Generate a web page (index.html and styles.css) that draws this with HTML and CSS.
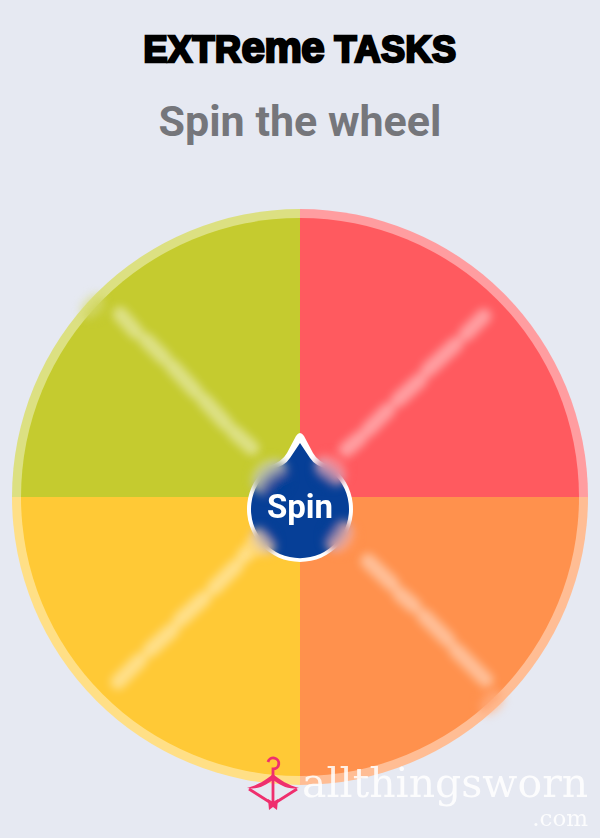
FILE: index.html
```html
<!DOCTYPE html>
<html lang="en">
<head>
    <meta charset="UTF-8">
    <meta name="viewport" content="width=device-width, initial-scale=1.0">
    <title>Extreme Tasks</title>
    <link rel="stylesheet" href="styles.css">
</head>
<body>
    <div class="page">
        <h1 class="title">EXTR<span class="title-low">eme</span> TASKS</h1>
        <h2 class="subtitle">Spin the wheel</h2>

        <svg class="wheel" viewBox="12 209 576 576" xmlns="http://www.w3.org/2000/svg">
            <defs>
                <filter id="blurText" x="-30%" y="-30%" width="160%" height="160%">
                    <feGaussianBlur stdDeviation="4.5"></feGaussianBlur>
                </filter>
                <filter id="blurArt" x="0" y="0" width="100%" height="100%">
                    <feGaussianBlur stdDeviation="8"></feGaussianBlur>
                </filter>
                <filter id="blurMask" x="-50%" y="-50%" width="200%" height="200%">
                    <feGaussianBlur stdDeviation="4"></feGaussianBlur>
                </filter>
                <mask id="smudges" maskUnits="userSpaceOnUse" x="12" y="209" width="576" height="576">
                    <g fill="#fff" filter="url(#blurMask)">
                        <circle cx="270" cy="477" r="20"></circle>
                        <circle cx="331" cy="470" r="17"></circle>
                        <circle cx="262" cy="542" r="15"></circle>
                        <circle cx="340" cy="537" r="17"></circle>
                        <circle cx="92" cy="306" r="14"></circle>
                        <circle cx="492" cy="703" r="14"></circle>
                    </g>
                </mask>
                <g id="art">
                    <!-- wheel: light rim, then the solid slice -->
                    <path class="rim-red" d="M300 497V209A288 288 0 0 1 588 497Z"></path>
                    <path class="rim-orange" d="M300 497H588A288 288 0 0 1 300 785Z"></path>
                    <path class="rim-yellow" d="M300 497V785A288 288 0 0 1 12 497Z"></path>
                    <path class="rim-green" d="M300 497H12A288 288 0 0 1 300 209Z"></path>
                    <path class="slice-red" d="M300 497V218A279 279 0 0 1 579 497Z"></path>
                    <path class="slice-orange" d="M300 497H579A279 279 0 0 1 300 776Z"></path>
                    <path class="slice-yellow" d="M300 497V776A279 279 0 0 1 21 497Z"></path>
                    <path class="slice-green" d="M300 497H21A279 279 0 0 1 300 218Z"></path>

                    <!-- blurred out slice labels -->
                    <g class="labels" filter="url(#blurText)">
                        <path d="M120 314L136 332M146 340L164 358M172 366L196 392M204 400L226 424M234 432L252 448"></path>
                        <path d="M484 316L466 334M456 344L428 370M420 380L398 400M388 410L368 430M360 438L346 450"></path>
                        <path d="M368 561L392 584M400 594L414 606M424 616L448 640M456 650L486 680"></path>
                        <path d="M118 682L140 660M150 650L172 630M180 620L204 598M214 588L236 566M244 556L254 546"></path>
                    </g>

                    <!-- spin button -->
                    <path class="pin" d="M296 436Q300 430 304 436L313 453Q318 462 331 466A53 53 0 1 1 269 466Q282 462 287 453Z"></path>
                    <path class="pin-inner" d="M300 443L310 458Q315 466 328 469A49 49 0 1 1 272 469Q285 466 290 458Z"></path>
                </g>
            </defs>

            <use href="#art"></use>
            <g mask="url(#smudges)">
                <use href="#art" filter="url(#blurArt)"></use>
            </g>
            <text class="spin-label" x="300" y="518">Spin</text>
        </svg>

        <div class="watermark">
            <svg class="hanger" viewBox="0 0 54 54" xmlns="http://www.w3.org/2000/svg">
                <path d="M22 6A5.5 5.5 0 1 1 27 13V18"></path>
                <path class="hanger-fill" d="M1 32C12 29 20 24 27 18C34 24 42 29 53 32C42 34 34 29 27 24C20 29 12 34 1 32Z"></path>
                <path d="M3 33L25 47M51 33L29 47M27 18V47"></path>
                <path class="hanger-fill" d="M22 43L27 46L32 43L31 54L27 51L23 54Z"></path>
            </svg>
            <div class="brand">
                <span class="brand-name">allthingsworn</span>
                <span class="brand-tld">.com</span>
            </div>
        </div>
    </div>
</body>
</html>
```

FILE: styles.css
```css
* {
    margin: 0;
    padding: 0;
    box-sizing: border-box;
}

body {
    background: #e6e9f2;
    font-family: 'Roboto', sans-serif;
}

.page {
    position: relative;
    width: 600px;
    height: 838px;
    overflow: hidden;
    display: flex;
    flex-direction: column;
    align-items: center;
    padding-top: 26px;
}

.title {
    font-family: 'Liberation Sans', sans-serif;
    font-size: 36px;
    line-height: 44px;
    font-weight: 700;
    color: #000;
    -webkit-text-stroke: 2.5px #000;
    letter-spacing: 0.5px;
    white-space: nowrap;
}

.title-low {
    font-size: 42px;
    letter-spacing: -0.5px;
}

.subtitle {
    margin-top: 25px;
    font-size: 43px;
    line-height: 48px;
    font-weight: 700;
    color: #75767b;
}

.wheel {
    display: block;
    width: 576px;
    height: 576px;
    margin-top: 64px;
    flex-shrink: 0;
}

.rim-red { fill: #ff9da0; }
.rim-orange { fill: #ffbd94; }
.rim-yellow { fill: #ffdf86; }
.rim-green { fill: #dce082; }

.slice-red { fill: #ff5a5f; }
.slice-orange { fill: #ff914d; }
.slice-yellow { fill: #ffc936; }
.slice-green { fill: #c5cb2f; }

.labels path {
    fill: none;
    stroke: #fff;
    stroke-width: 15;
    stroke-linecap: round;
    opacity: 0.42;
}

.pin { fill: #fff; }
.pin-inner { fill: #063f97; }

.spin-label {
    font-family: 'Roboto', sans-serif;
    font-size: 33px;
    font-weight: 700;
    fill: #fff;
    text-anchor: middle;
}

/* site watermark sits on top of the wheel */
.watermark {
    position: absolute;
    left: 246px;
    top: 756px;
    display: flex;
    align-items: flex-start;
}

.hanger {
    width: 54px;
    height: 54px;
    flex-shrink: 0;
}

.hanger path {
    fill: none;
    stroke: #ef2f6e;
    stroke-width: 2.8;
}

.hanger .hanger-fill {
    fill: #ef2f6e;
    stroke: none;
}

.brand {
    display: flex;
    flex-direction: column;
    align-items: flex-end;
    margin-left: 2px;
    color: rgba(255, 255, 255, 0.85);
    font-family: 'DejaVu Serif', serif;
}

.brand-name {
    font-size: 41px;
    line-height: 46px;
    margin-top: 4px;
}

.brand-tld {
    font-size: 23px;
    line-height: 24px;
}
```
